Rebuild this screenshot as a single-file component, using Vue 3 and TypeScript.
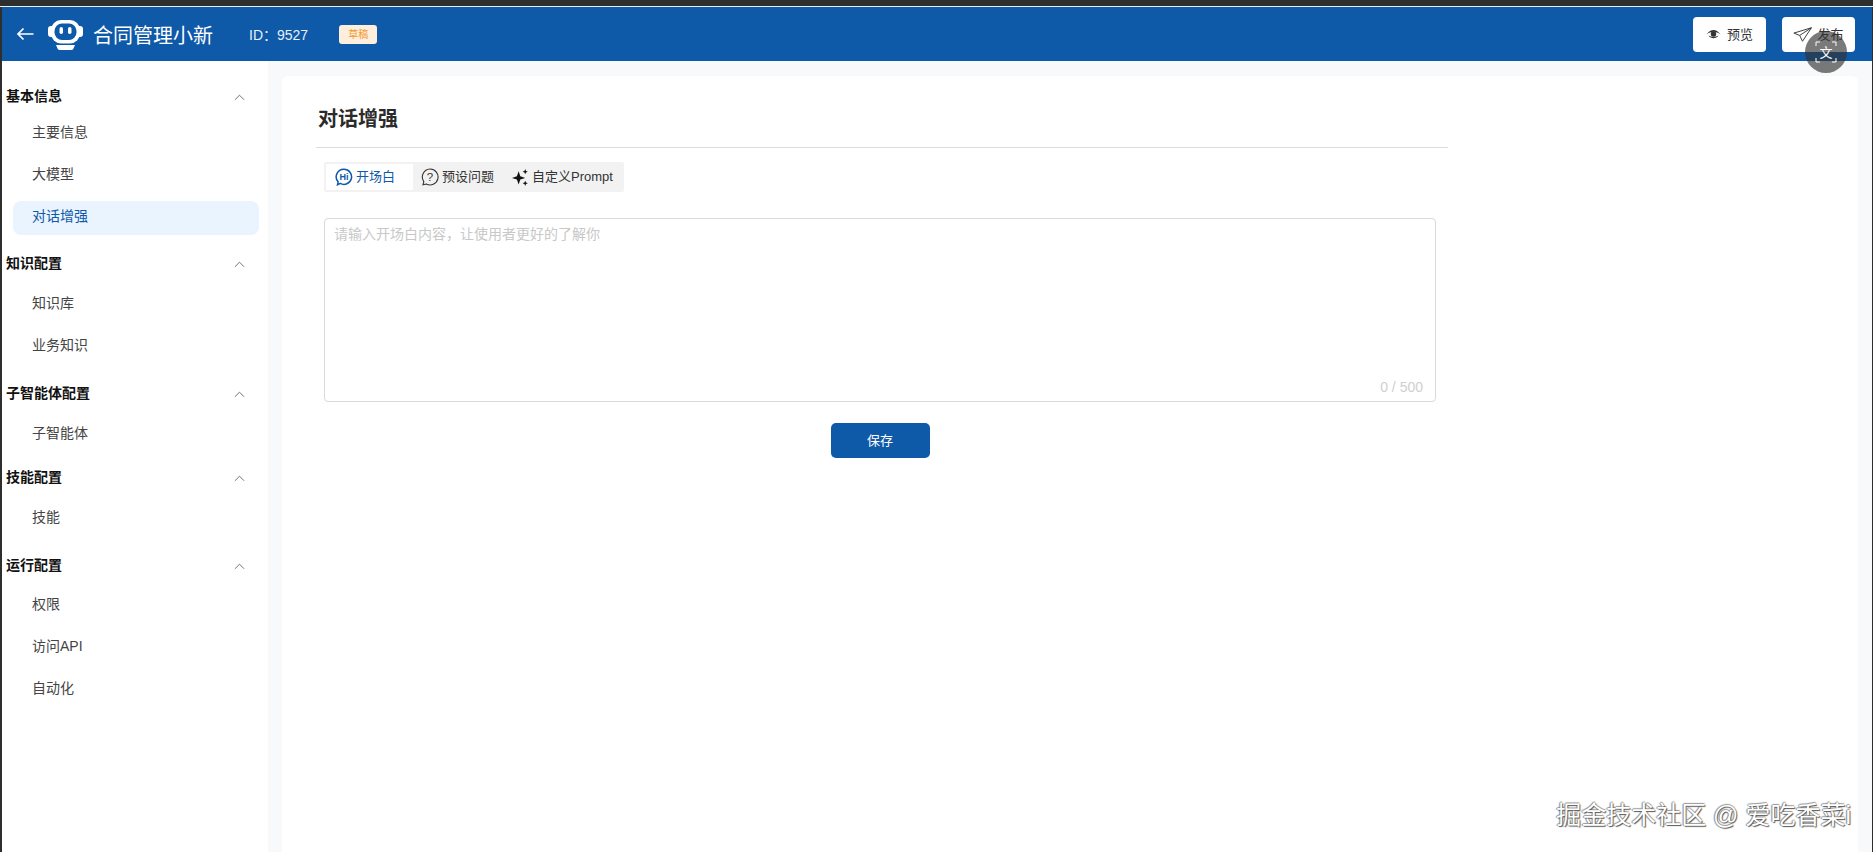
<script setup lang="ts">
interface Section { title: string; items: string[] }
const sections: Section[] = [
  { title: '基本信息', items: ['主要信息', '大模型', '对话增强'] },
  { title: '知识配置', items: ['知识库', '业务知识'] },
  { title: '子智能体配置', items: ['子智能体'] },
  { title: '技能配置', items: ['技能'] },
  { title: '运行配置', items: ['权限', '访问API', '自动化'] },
]
const activeItem = '对话增强'
</script>

<template>
  <div class="shell">
    <div class="titlebar"></div>
    <div class="window">
      <header class="topbar">
        <svg class="back" viewBox="0 0 18 14" width="18" height="14" fill="none" stroke="#fff" stroke-width="1.7">
          <path d="M17.500 7H2M7.500 1.500 2 7l5.500 5.500" />
        </svg>
        <svg class="bot" viewBox="0 0 35 30" width="35" height="30">
          <rect x="0" y="6" width="35" height="11" rx="3" fill="#fff" />
          <rect x="3" y="0" width="29" height="23.500" rx="10" fill="#fff" />
          <rect x="6.500" y="3.500" width="22" height="16.500" rx="7.500" fill="#0e59a8" />
          <rect x="11.500" y="7" width="3.500" height="7" rx="1.750" fill="#fff" />
          <rect x="20" y="7" width="3.500" height="7" rx="1.750" fill="#fff" />
          <path d="M8 25h19l-1.500 3.500a2 2 0 0 1-2 1.500h-12a2 2 0 0 1-2-1.500z" fill="#fff" />
        </svg>
        <span class="app-name">合同管理小新</span>
        <span class="app-id">ID：9527</span>
        <span class="tag">草稿</span>
        <span class="spacer"></span>
        <button class="head-btn">
          <svg viewBox="0 0 16 10" width="15" height="10">
            <path d="M.5 5.500C3 2 5.500.6 8 .6s5 1.400 7.500 4.900C13 3.500 10.500 2.600 8 2.600S3 3.500.5 5.500z" fill="#333" />
            <path d="M2.500 6.500C4 8.300 6 9.400 8 9.400s4-1.100 5.500-2.900C11.500 7.500 10 8 8 8S4.500 7.500 2.500 6.500z" fill="#333" />
            <circle cx="8" cy="5" r="2.900" fill="#333" />
          </svg>
          <span>预览</span>
        </button>
        <button class="head-btn publish">
          <svg viewBox="0 0 20 16" width="19" height="15" fill="none" stroke="#333" stroke-width="1" stroke-linejoin="round">
            <path d="M19.500 .8 .8 6.500l6.200 2.500 3 6.200zM19.500 .8 7 9" />
          </svg>
          <span>发布</span>
        </button>
      </header>

      <div class="body">
        <aside class="sidebar">
          <section v-for="s in sections" :key="s.title" class="group">
            <div class="group-title">
              <span>{{ s.title }}</span>
              <svg viewBox="0 0 12 7" width="11" height="7" fill="none" stroke="#555" stroke-width=".9">
                <path d="M1 6 6 1l5 5" />
              </svg>
            </div>
            <div v-for="item in s.items" :key="item" class="item" :class="{ active: item === activeItem }">
              {{ item }}
            </div>
          </section>
        </aside>

        <main class="main">
          <div class="panel">
            <h1 class="title">对话增强</h1>
            <div class="tabs">
              <div class="tab on">
                <svg viewBox="0 0 18 18" width="18" height="18" fill="none">
                  <path d="M9 1.200a7.600 7.600 0 1 1-3.800 14.200L2.500 16.800l.6-3A7.600 7.600 0 0 1 9 1.200z" stroke="#0e59a8" stroke-width="1.500" />
                  <text x="9" y="12" text-anchor="middle" font-size="9" font-weight="700" font-family="Liberation Sans" fill="#0e59a8">Hi</text>
                </svg>
                <span>开场白</span>
              </div>
              <div class="tab second">
                <svg viewBox="0 0 18 18" width="18" height="18" fill="none">
                  <path d="M9 1a8 8 0 1 1-3.800 15L2 16.800l.8-3.200A8 8 0 0 1 9 1z" stroke="#333" stroke-width="1.100" />
                  <text x="9" y="13" text-anchor="middle" font-size="11.500" font-family="Liberation Sans" fill="#333">?</text>
                </svg>
                <span>预设问题</span>
              </div>
              <div class="tab third">
                <svg viewBox="0 0 18 18" width="17" height="17" fill="#111">
                  <path d="M7 2.500 8.800 7.800 14 9.500 8.800 11.200 7 16.500 5.200 11.200 0 9.500 5.200 7.800z" />
                  <path d="M14 0l.8 2 2 .8-2 .8L14 5.600l-.8-2-2-.8 2-.8z" />
                  <path d="M14 12.400l.8 2 2 .8-2 .8-.8 2-.8-2-2-.8 2-.8z" />
                </svg>
                <span>自定义Prompt</span>
              </div>
            </div>
            <div class="textarea">
              <span class="placeholder">请输入开场白内容，让使用者更好的了解你</span>
              <span class="count">0 / 500</span>
            </div>
            <div class="actions">
              <button class="save">保存</button>
            </div>
          </div>
        </main>
      </div>
    </div>

    <div class="translate">
      <svg viewBox="0 0 22 22" width="22" height="22" fill="none" stroke="#fff" stroke-width="1">
        <path d="M1 5V1h4M17 1h4v4M21 17v4h-4M5 21H1v-4" />
        <text x="11" y="16" text-anchor="middle" font-size="13" fill="#fff" stroke="none" font-family="Noto Sans CJK SC">文</text>
      </svg>
    </div>
    <div class="watermark">掘金技术社区 @ 爱吃香菜i</div>
  </div>
</template>

<style>
html, body { margin: 0; padding: 0; background: #fff; }
</style>

<style scoped>
.shell {
  position: relative;
  width: 1873px;
  height: 852px;
  overflow: hidden;
  display: flex;
  flex-direction: column;
  background: #2e2e2e;
  font-family: "Liberation Sans", "Noto Sans CJK SC", sans-serif;
}
.titlebar { height: 7px; flex: none; background: #2e2e2e; border-bottom: 1px solid #e8eef5; box-sizing: border-box; }
.window { flex: 1; min-height: 0; margin: 0 1px 0 2px; display: flex; flex-direction: column; background: #f8f9fb; }
.topbar {
  height: 54px;
  flex: none;
  display: flex;
  align-items: center;
  background: #0e59a8;
  color: #fff;
}
.back { margin-left: 14px; }
.bot { margin-left: 14px; margin-top: 2px; }
.app-name { margin-left: 10px; font-size: 20px; }
.app-id { margin-left: 36px; font-size: 14px; color: #e8f0f9; }
.tag {
  margin-left: 31px;
  width: 38px;
  height: 19px;
  line-height: 19px;
  text-align: center;
  background: #fdeedd;
  color: #f39a2b;
  border-radius: 3px;
  font-size: 10px;
}
.spacer { flex: 1; }
.head-btn {
  width: 73px;
  height: 35px;
  margin-right: 16px;
  padding: 0;
  display: flex;
  align-items: center;
  justify-content: center;
  gap: 6px;
  border: 0;
  border-radius: 4px;
  background: #fff;
  color: #333;
  font: 13px "Liberation Sans", "Noto Sans CJK SC", sans-serif;
}
.head-btn span { padding-bottom: 2px; }
.publish { margin-right: 17px; gap: 5px; }
.body { flex: 1; min-height: 0; display: flex; }
.sidebar {
  width: 266px;
  flex: none;
  background: #fff;
  padding-top: 14px;
  box-sizing: border-box;
}
.group { display: flow-root; margin-bottom: 2px; }
.group:first-child { margin-bottom: -1px; }
.group:nth-child(3) { margin-bottom: -2px; }
.group-title {
  height: 40px;
  margin-bottom: 4px;
  padding: 0 23px 0 4px;
  display: flex;
  align-items: center;
  justify-content: space-between;
  font-size: 14px;
  font-weight: 700;
  color: #111;
}
.group-title svg { margin-top: 4px; }
.group:first-child .group-title { margin-bottom: 2px; }
.group:last-child .group-title { margin-bottom: 3px; }
.item {
  height: 34px;
  margin: 0 9px 8px 11px;
  padding-left: 19px;
  line-height: 34px;
  border-radius: 8px;
  font-size: 14px;
  color: #444;
}
.group:first-child .item { line-height: 30px; }
.item.active { background: #eaf4fe; color: #0e59a8; }
.main { flex: 1; min-width: 0; padding: 15px 14px 0 14px; }
.panel {
  height: 100%;
  box-sizing: border-box;
  background: #fff;
  border-radius: 6px 6px 0 0;
  padding: 0 0 0 34px;
}
.title {
  width: 1132px;
  height: 72px;
  margin: 0;
  box-sizing: border-box;
  padding: 29px 0 0 2px;
  line-height: 28px;
  border-bottom: 1px solid #dcdcdc;
  font-size: 20px;
  font-weight: 700;
  color: #2b2b2b;
}
.tabs {
  width: 300px;
  height: 30px;
  margin: 14px 0 0 8px;
  padding: 2px;
  box-sizing: border-box;
  display: flex;
  background: #f2f2f2;
  border-radius: 2px;
}
.tab {
  display: flex;
  align-items: center;
  gap: 3px;
  height: 26px;
  font-size: 13px;
  color: #333;
  white-space: nowrap;
}
.tab span { padding-bottom: 4px; }
.tab.on { width: 87px; box-sizing: border-box; padding-left: 9px; background: #fff; color: #0e59a8; }
.tab.second { padding-left: 8px; }
.tab.third { padding-left: 18px; }
.textarea {
  position: relative;
  width: 1112px;
  height: 184px;
  margin: 26px 0 0 8px;
  box-sizing: border-box;
  border: 1px solid #d9d9d9;
  border-radius: 4px;
  padding: 4px 9px;
  font-size: 14px;
}
.placeholder { color: #c8c8c8; }
.count { position: absolute; right: 12px; bottom: 6px; color: #cfcfcf; font-size: 14px; }
.actions { width: 1112px; margin: 21px 0 0 8px; display: flex; justify-content: center; }
.save {
  width: 99px;
  height: 35px;
  padding: 0 0 3px;
  border: 0;
  border-radius: 5px;
  background: #0e59a8;
  color: #fff;
  font: 13px "Liberation Sans", "Noto Sans CJK SC", sans-serif;
}
.translate {
  position: absolute;
  left: 1805px;
  top: 31px;
  width: 42px;
  height: 42px;
  border-radius: 50%;
  background: rgba(50, 50, 50, .65);
  display: flex;
  align-items: center;
  justify-content: center;
}
.watermark {
  position: absolute;
  right: 22px;
  top: 799px;
  font-size: 25px;
  line-height: 32px;
  color: #fff;
  white-space: nowrap;
  text-shadow: 1px 1px 1px #555, -1px 0 1px #888, 0 -1px 1px #999;
}
</style>
